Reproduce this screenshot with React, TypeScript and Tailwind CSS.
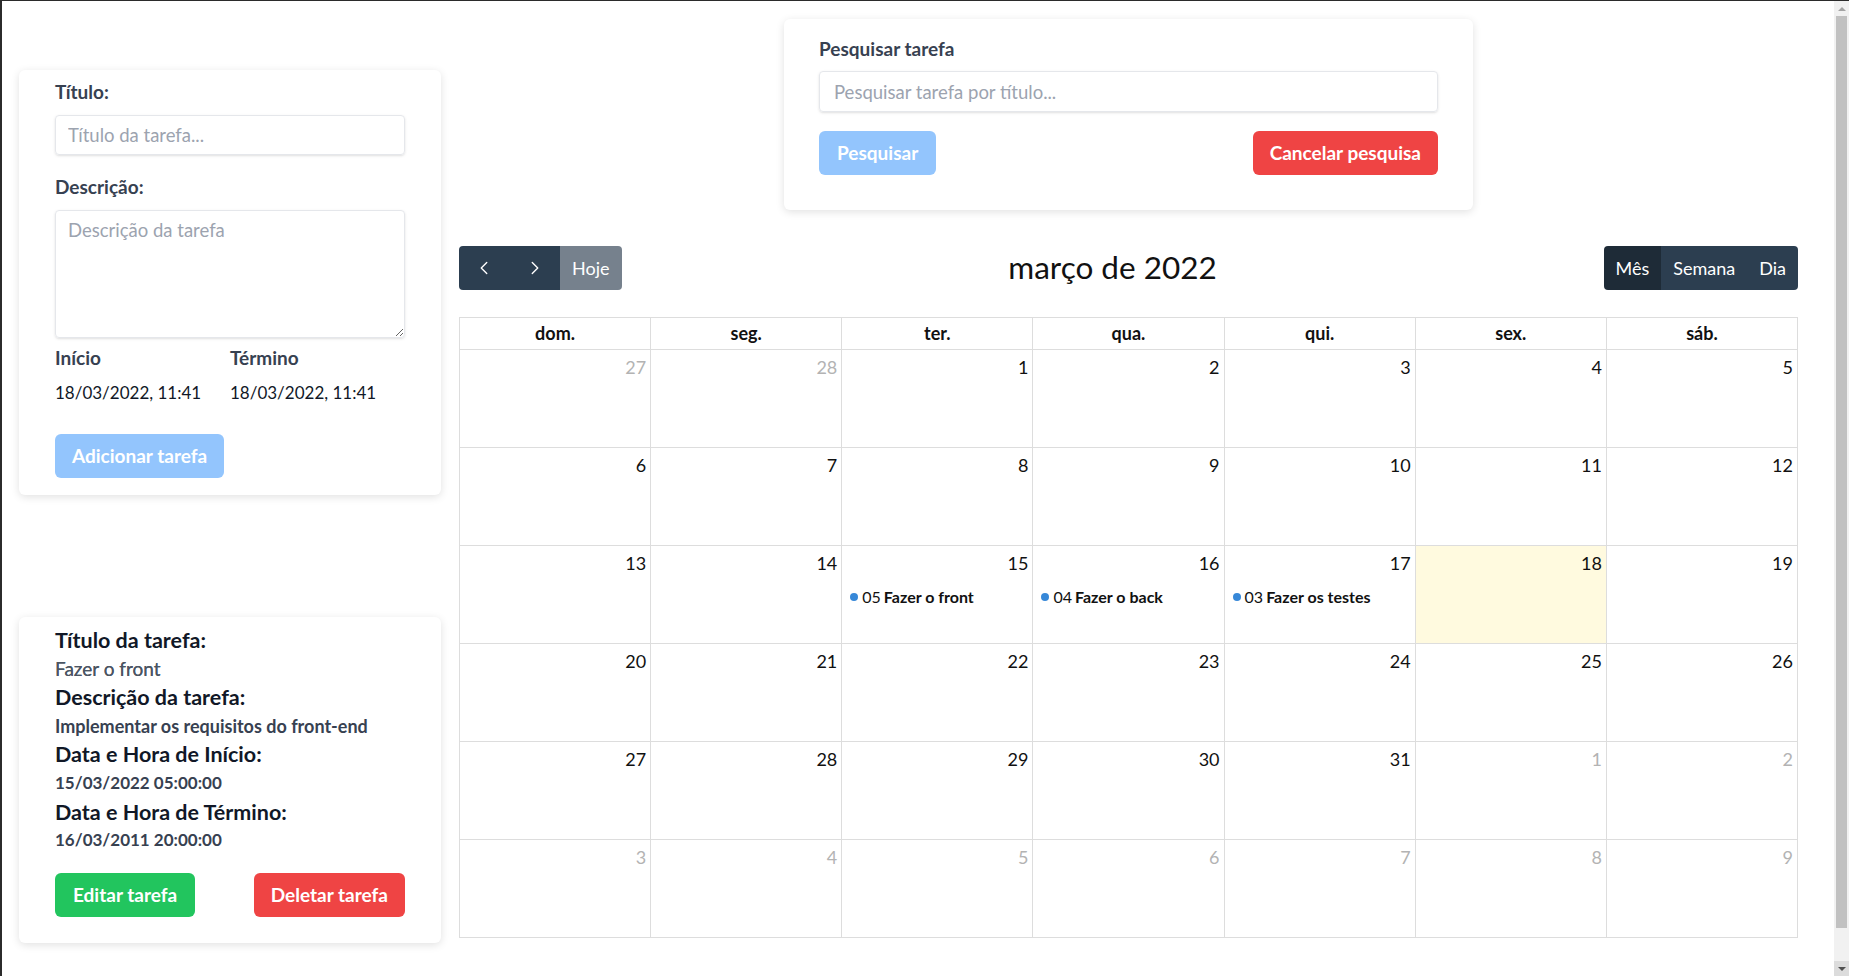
import React from 'react';
import { ChevronLeft, ChevronRight } from 'lucide-react';

type Day = { d: number; other?: boolean; today?: boolean };

const weeks: Day[][] = [
  [{ d: 27, other: true }, { d: 28, other: true }, { d: 1 }, { d: 2 }, { d: 3 }, { d: 4 }, { d: 5 }],
  [{ d: 6 }, { d: 7 }, { d: 8 }, { d: 9 }, { d: 10 }, { d: 11 }, { d: 12 }],
  [{ d: 13 }, { d: 14 }, { d: 15 }, { d: 16 }, { d: 17 }, { d: 18, today: true }, { d: 19 }],
  [{ d: 20 }, { d: 21 }, { d: 22 }, { d: 23 }, { d: 24 }, { d: 25 }, { d: 26 }],
  [{ d: 27 }, { d: 28 }, { d: 29 }, { d: 30 }, { d: 31 }, { d: 1, other: true }, { d: 2, other: true }],
  [
    { d: 3, other: true },
    { d: 4, other: true },
    { d: 5, other: true },
    { d: 6, other: true },
    { d: 7, other: true },
    { d: 8, other: true },
    { d: 9, other: true },
  ],
];

const events: Record<number, { time: string; title: string }> = {
  15: { time: '05', title: 'Fazer o front' },
  16: { time: '04', title: 'Fazer o back' },
  17: { time: '03', title: 'Fazer os testes' },
};

const weekDays = ['dom.', 'seg.', 'ter.', 'qua.', 'qui.', 'sex.', 'sáb.'];

const TaskForm = () => (
  <div className="bg-white rounded-md shadow-[0_2px_8px_rgba(0,0,0,0.12)] px-9 pt-[10px] pb-[17px]">
    <label className="block text-[19px] leading-6 font-bold text-[#374151] mb-[11px]">Título:</label>
    <input
      className="block w-full h-10 border border-[#e5e7eb] rounded shadow-sm px-3 text-[18.5px] placeholder:text-[#9ca3af] outline-none"
      placeholder="Título da tarefa..."
    />
    <label className="block text-[19px] leading-6 font-bold text-[#374151] mt-5 mb-[11px]">Descrição:</label>
    <textarea
      className="block w-full h-32 border border-[#e5e7eb] rounded shadow-sm px-3 py-1.5 text-[18.5px] placeholder:text-[#9ca3af] outline-none"
      placeholder="Descrição da tarefa"
    />
    <div className="flex mt-2">
      <div className="w-[175px]">
        <div className="text-[19px] leading-6 font-bold text-[#374151]">Início</div>
        <div className="text-[17px] leading-6 text-[#111827] mt-[11px]">18/03/2022, 11:41</div>
      </div>
      <div>
        <div className="text-[19px] leading-6 font-bold text-[#374151]">Término</div>
        <div className="text-[17px] leading-6 text-[#111827] mt-[11px]">18/03/2022, 11:41</div>
      </div>
    </div>
    <button className="mt-[29px] h-11 px-[17px] rounded-md bg-[#93c5fd] text-white font-bold text-[19px]">
      Adicionar tarefa
    </button>
  </div>
);

const TaskDetails = () => (
  <div className="bg-white rounded-md shadow-[0_2px_8px_rgba(0,0,0,0.12)] px-9 pt-[9px] pb-[26px]">
    <div className="text-[21.5px] leading-[28.6px] font-bold text-[#111827]">Título da tarefa:</div>
    <div className="text-[19px] leading-[28.6px] text-[#4b5563] [text-shadow:0_0_0.4px_#4b5563]">Fazer o front</div>
    <div className="text-[21.5px] leading-[28.6px] font-bold text-[#111827]">Descrição da tarefa:</div>
    <div className="text-[18px] leading-[28.6px] font-bold text-[#374151]">Implementar os requisitos do front-end</div>
    <div className="text-[21.5px] leading-[28.6px] font-bold text-[#111827]">Data e Hora de Início:</div>
    <div className="text-[17px] leading-[28.6px] font-bold text-[#374151]">15/03/2022 05:00:00</div>
    <div className="text-[21.5px] leading-[28.6px] font-bold text-[#111827]">Data e Hora de Término:</div>
    <div className="text-[17px] leading-[28.6px] font-bold text-[#374151]">16/03/2011 20:00:00</div>
    <div className="flex justify-between mt-[18px]">
      <button className="h-11 px-[18px] rounded-md bg-[#22c55e] text-white font-bold text-[19px]">Editar tarefa</button>
      <button className="h-11 px-[17px] rounded-md bg-[#ef4444] text-white font-bold text-[19px]">Deletar tarefa</button>
    </div>
  </div>
);

const SearchCard = () => (
  <div className="w-[689px] mx-auto bg-white rounded-md shadow-[0_2px_8px_rgba(0,0,0,0.12)] px-[35px] pt-[18px] pb-[35px]">
    <label className="block text-[19px] leading-6 font-bold text-[#374151] mb-[10px]">Pesquisar tarefa</label>
    <input
      className="block w-full h-[41px] border border-[#e5e7eb] rounded shadow-sm px-3.5 text-[18.5px] placeholder:text-[#9ca3af] outline-none"
      placeholder="Pesquisar tarefa por título..."
    />
    <div className="flex justify-between mt-[19px]">
      <button className="h-11 px-[18px] rounded-md bg-[#93c5fd] text-white font-bold text-[19px]">Pesquisar</button>
      <button className="h-11 px-[17px] rounded-md bg-[#ef4444] text-white font-bold text-[19px]">Cancelar pesquisa</button>
    </div>
  </div>
);

const Calendar = () => (
  <div className="mt-9 text-[18px]">
    {/* toolbar */}
    <div className="flex items-center justify-between h-11 mb-[27px]">
      <div className="flex h-11">
        <button className="w-[50px] flex items-center justify-center bg-[#2c3e50] text-white rounded-l-[4px]">
          <ChevronLeft size={22} strokeWidth={1.5} />
        </button>
        <button className="w-[51px] flex items-center justify-center bg-[#2c3e50] text-white">
          <ChevronRight size={22} strokeWidth={1.5} />
        </button>
        <button className="px-[12px] bg-[#76818d] text-white rounded-r-[4px]">Hoje</button>
      </div>
      <h2 className="text-[31.5px] text-[#111]">março de 2022</h2>
      <div className="flex h-11 rounded-[4px] overflow-hidden">
        <button className="px-[12px] bg-[#1e2b37] text-white">Mês</button>
        <button className="px-[12px] bg-[#2c3e50] text-white">Semana</button>
        <button className="px-[12px] bg-[#2c3e50] text-white">Dia</button>
      </div>
    </div>

    {/* grid */}
    <div className="border-l border-t border-[#ddd]">
      <div className="grid grid-cols-7">
        {weekDays.map((w) => (
          <div key={w} className="border-r border-b border-[#ddd] text-center font-bold leading-[27px] py-[2px] text-[#111]">
            {w}
          </div>
        ))}
      </div>
      {weeks.map((week, i) => (
        <div key={i} className="grid grid-cols-7">
          {week.map((day, j) => {
            const ev = !day.other ? events[day.d] : undefined;
            return (
              <div
                key={j}
                className={`h-[98px] border-r border-b border-[#ddd] ${day.today ? 'bg-[#fffadf]' : 'bg-white'}`}
              >
                <div className={`text-right px-1 pt-1 leading-[27px] ${day.other ? 'text-[#b3b3b3]' : 'text-[#111]'}`}>
                  {day.d}
                </div>
                {ev && (
                  <div className="flex items-center mt-[8px] mx-[2px] px-[2px] text-[16px] leading-[23px] text-[#111]">
                    <span className="w-2 h-2 rounded-full bg-[#3788d8] mx-1" />
                    <span className="mr-[3px]">{ev.time}</span>
                    <span className="font-bold">{ev.title}</span>
                  </div>
                )}
              </div>
            );
          })}
        </div>
      ))}
    </div>
  </div>
);

const Scrollbar = () => (
  <div className="w-[15px] bg-[#f1f1f1] flex flex-col shrink-0">
    <div className="h-[15px] flex items-center justify-center">
      <div className="w-0 h-0 border-l-[4px] border-r-[4px] border-b-[4px] border-l-transparent border-r-transparent border-b-[#a3a3a3]" />
    </div>
    <div className="mx-[2px] h-[912px] bg-[#c1c1c1]" />
    <div className="flex-1" />
    <div className="h-[15px] flex items-center justify-center bg-[#dcdcdc]">
      <div className="w-0 h-0 border-l-[4px] border-r-[4px] border-t-[4px] border-l-transparent border-r-transparent border-t-[#505050]" />
    </div>
  </div>
);

export default function App() {
  return (
    <div className="h-[976px] flex overflow-hidden border-t border-l-2 border-[#2b2b2b] bg-white [font-family:Lato,'Noto_Sans',sans-serif]">
      <div className="flex-1 flex pl-[17px] pr-[36px]">
        <div className="w-[422px] shrink-0 pt-[69px]">
          <TaskForm />
          <div className="mt-[122px]">
            <TaskDetails />
          </div>
        </div>
        <div className="flex-1 ml-[18px] pt-[18px]">
          <SearchCard />
          <Calendar />
        </div>
      </div>
      <Scrollbar />
    </div>
  );
}
